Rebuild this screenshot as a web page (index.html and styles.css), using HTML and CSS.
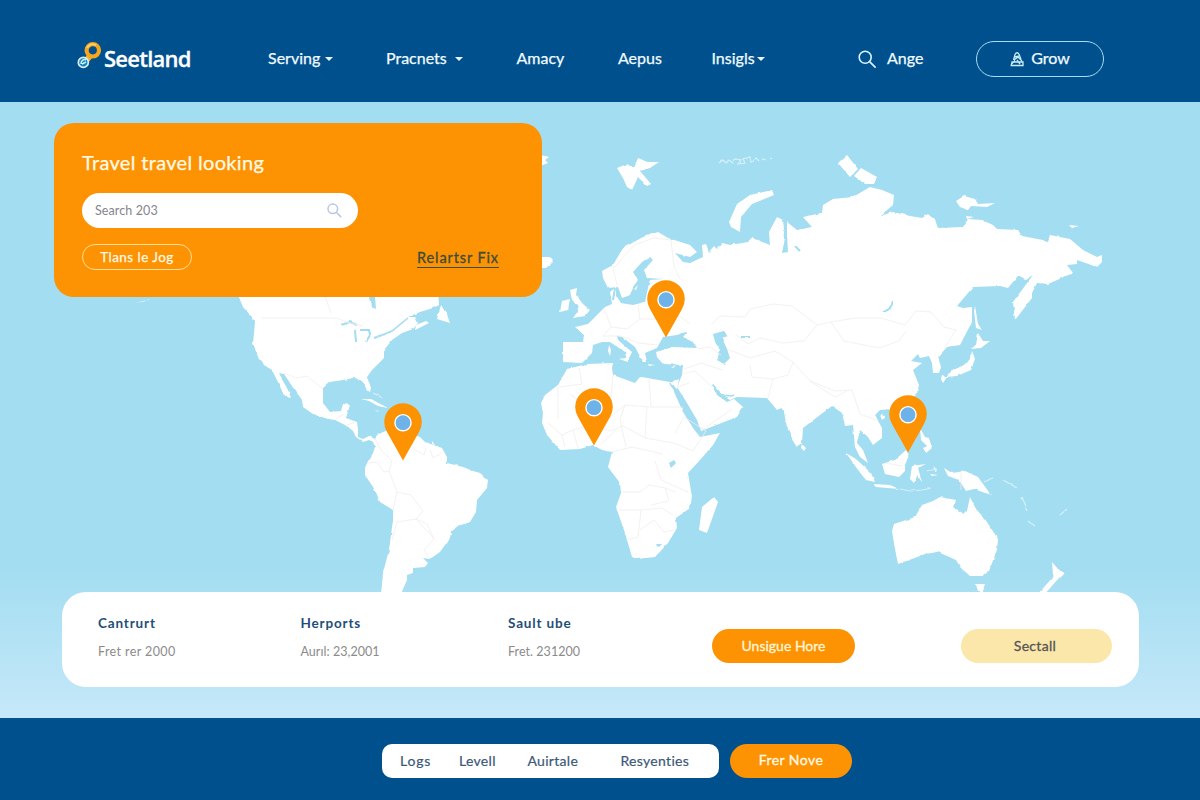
FILE: index.html
```html
<!DOCTYPE html>
<html lang="en">
<head>
<meta charset="utf-8">
<title>Seetland</title>
<link rel="stylesheet" href="styles.css">
</head>
<body>
<header class="header">
  <a class="logo">
    <svg width="27" height="30" viewBox="0 0 27 30" fill="none">
      <path d="M12.5 15.5l-4 5" stroke="#f3b13e" stroke-width="6"/>
      <circle cx="15.8" cy="9.3" r="6.2" stroke="#f9a51d" stroke-width="4.2"/>
      <path d="M10 7a6.5 6.5 0 0 1 9-3" stroke="#ffd878" stroke-width="1.6"/>
      <circle cx="6.3" cy="21.4" r="5" fill="#1580bd" stroke="#d9eef2" stroke-width="1.7"/>
      <path d="M4 23c0-4 3-5 5-4M5 23l4-2" stroke="#c8f3fa" stroke-width="1.5"/>
    </svg>
    <span>Seetland</span>
  </a>
  <a class="nav serving">Serving <i class="caret"></i></a>
  <a class="nav pracnets">Pracnets <i class="caret"></i></a>
  <a class="nav">Amacy</a>
  <a class="nav">Aepus</a>
  <a class="nav insigls">Insigls <i class="caret"></i></a>
  <a class="nav find">
    <svg width="19" height="19" viewBox="0 0 19 19" fill="none" stroke="#d8f3ff" stroke-width="1.6"><circle cx="7.2" cy="7.2" r="6"/><path d="M11.6 11.6l6 6"/></svg>
    <span>Ange</span>
  </a>
  <a class="nav grow">
    <svg width="15" height="16" viewBox="0 0 15 16" fill="none" stroke="#c8edfa" stroke-width="1.3"><path d="M3.5 9L5 3.5Q7 0 9.2 3.5L11 8.5M5 6l4-1M4 9l4-3 4 4M1 13.5l4-4M2 11h11v3.5H1.2zM7 9l3 4"/></svg>
    <span>Grow</span>
  </a>
</header>

<main class="stage">
  <svg class="map" width="1200" height="616" viewBox="0 102 1200 616">
    <defs>
      <filter id="coast" x="0" y="0" width="100%" height="100%">
        <feTurbulence type="fractalNoise" baseFrequency="0.16" numOctaves="1" seed="4"/>
        <feDisplacementMap in="SourceGraphic" scale="2.6" xChannelSelector="R" yChannelSelector="G"/>
        <feGaussianBlur stdDeviation="0.35"/>
      </filter>
    </defs>
    <g class="land" filter="url(#coast)">
      <!-- North and South America -->
      <path d="M236 290L243 307 252 317 255 322 254 333 253 343 258 357 267 367 272 370 277 380 283 393 289 398 291 397 287 388 282 379 279 373 284 374 292 386 302 400 303 407 313 414 328 419 335 420 347 426 353 431 356 437 363 442 369 440 373 442 375 447 373 453 367 463 365 468 365 475 375 490 380 502 393 510 393 520 389 550 383 573 381 596 400 596 407 580 407 575 413 573 413 568 425 567 428 563 423 558 430 559 440 552 450 538 451 531 458 526 470 522 476 512 477 500 487 488 488 480 480 473 473 471 463 467 447 463 447 457 442 448 425 442 420 437 395 428 383 432 377 435 375 439 369 436 363 439 358 437 358 430 357 422 346 418 350 405 343 404 341 411 330 412 323 403 323 388 330 382 343 380 355 378 362 381 367 390 370 392 371 388 367 377 372 370 384 358 384 350 392 340 402 333 413 329 418 323 415 317 408 317 420 312 433 308 439 305 438 290Z"/>
      <path d="M441 305L437 319 450 323 447 315ZM415 330L429 323 426 321 416 325Z"/>
      <path d="M136 303L150 299 158 295 146 301ZM361 399L371 399 388 408 378 406 369 401ZM375 410l5 2-4-1zM432 441l3 4-3-1z"/>
      <!-- Eurasia -->
      <path d="M563 342L583 342 584 335 575 327 588 324 597 315 605 307 612 304 610 292 616 287 616 295 621 303 633 305 645 302 648 288 650 280 663 279 647 278 644 270 653 260 650 257 642 262 633 272 638 280 633 287 630 295 622 298 618 287 608 288 603 278 602 271 613 265 623 248 643 237 658 232 668 238 690 245 697 252 690 257 675 253 683 262 690 263 703 257 702 245 706 244 709 252 714 246 717 249 722 243 730 245 748 242 752 238 770 245 769 232 777 217 783 220 785 238 782 253 788 252 787 235 787 222 797 230 812 227 803 217 822 213 823 205 833 199 853 197 870 187 882 190 894 195 893 205 880 216 893 212 910 216 922 218 928 214 935 220 938 228 963 227 968 219 982 220 993 225 997 229 1018 230 1022 236 1048 241 1050 235 1070 239 1083 250 1097 257 1102 255 1102 262 1097 267 1077 260 1077 264 1067 265 1073 273 1048 284 1037 283 1032 293 1032 298 1015 320 1013 302 1033 275 1025 280 1018 276 1008 288 1000 286 973 287 957 306 963 308 972 307 972 322 960 345 947 347 938 357 941 367 939 373 933 373 932 363 929 356 920 358 918 354 911 361 922 363 913 370 919 385 917 393 900 408 880 410 875 415 882 428 882 438 873 445 868 437 860 430 857 443 863 450 868 463 860 457 855 447 853 425 845 426 842 413 832 406 820 415 803 428 802 443 796 447 787 427 783 408 777 410 767 398 737 397 730 400 722 395 712 383 717 395 727 402 734 399 743 407 737 417 701 431 697 420 687 403 677 387 682 375 683 365 663 364 657 357 656 352 673 347 697 348 692 341 683 337 687 332 677 335 663 337 657 348 645 353 647 362 643 362 635 347 622 337 617 336 618 340 632 352 627 362 625 352 610 342 602 342 593 345 592 353 582 363 563 362Z"/>
      <!-- Africa and Madagascar -->
      <path d="M613 363L587 364 567 369 558 385 545 395 541 403 543 413 542 423 547 435 560 450 580 449 593 445 602 450 612 452 608 467 620 483 621 493 616 507 625 533 632 557 637 559 655 557 668 543 677 528 676 518 690 508 692 497 688 473 700 460 713 445 720 433 700 437 693 428 683 412 671 385 677 389 679 379 670 382 653 379 640 377 635 383 613 375 612 368ZM714 497L718 502 707 533 699 530 702 507Z"/>
      <!-- British Isles, Iceland, Mediterranean -->
      <path d="M570 290L577 288 576 295 583 304 590 310 585 316 573 318 578 311 577 304 572 300ZM562 301L570 299 568 310 560 312ZM540 257L550 257 553 261 546 268 538 268ZM540 155l9 2-4 3 3 3-8 3zM609 345l2 5-1 6-2-5zM619 359l8-1 1 4zM634 289l4-4-2 5zM648 364l7 1-6 1zM671 367l5-1-3 2z"/>
      <!-- Arctic islands -->
      <path d="M617 168L627 164 634 167 638 158 648 162 659 162 650 168 640 171 651 184 647 186 638 177 632 190 627 187 623 178ZM731 227L729 222 737 204 750 195 772 190 774 195 752 204 741 217 740 232ZM838 163L847 155 858 169 850 177ZM854 176L861 168 877 177 874 184 865 184ZM956 201L964 196 975 199 978 204 995 203 987 207 971 206 968 210 960 207ZM1069 225l10 1-7 2zM966 216l8 1-7 2z"/>
      <!-- Japan and Sakhalin -->
      <path d="M975 306L978 324 982 330 976 328 974 311ZM978 333L983 341 990 341 981 348 971 349 976 345ZM972 351L975 359 971 370 957 376 945 377 953 370 965 365 970 359ZM942 375l5 2-4 6-2-4z"/>
      <!-- South East Asia -->
      <path d="M846 453L856 459 871 473 875 482 866 480 858 470ZM873 484L890 485 899 489 876 487ZM882 464L895 460 906 450 909 455 905 465 905 471 899 477 885 474ZM912 466L926 464 918 468 922 482 917 475 914 483 910 479ZM920 428L925 437 929 438 932 448 926 453 923 448 927 446 921 440ZM944 468L952 473 965 471 978 477 991 495 974 489 966 491 959 480 948 476ZM802 444l4 4-2 3-3-3zM880 415l5 1-3 4zM933 466l4 4-2 1zM930 474l8 1-6 1z"/>
      <!-- Australia and New Zealand -->
      <path d="M892 531L894 524 915 517 922 505 933 501 940 497 956 500 953 507 964 514 967 511 970 497 976 509 985 519 998 539 997 550 989 571 983 576 970 576 961 568 956 560 947 556 938 552 925 554 912 559 898 564 895 549ZM976 584L985 584 982 592 978 592ZM1052 562L1058 569 1065 573 1058 580 1053 575ZM1054 576L1058 579 1043 596 1036 596Z"/>
      <path class="isles" d="M719 163l4-3 3 3 3-3 4 3 2-4 6 1-3 4 7-1-2-4 7-2 1 5 5-4 3 3M762 160l3-1M770 159l2-1M900 489l10 2 13-1 8-2M984 482l9-4M1003 480l14 8M1022 497l6 14M1028 521l7 5M1060 515l7-6M373 393l10 5M927 471l10-2"/>
    </g>
    <!-- Inland water -->
    <g class="water" filter="url(#coast)">
      <path d="M713 334L724 331 728 336 722 338 727 349 730 358 724 364 717 360 720 350 715 342ZM669 463L674 460 676 463 671 468ZM369 297L375 297 376 309 371 307ZM656 544l6 0-3 3zM679 334l7-2-4 4z"/>
      <path class="rivers" d="M883 312q8-2 10-11M341 325l9-3 7 3M355 330l1 12M360 330l9 0 1 5-4 7M374 338l8-3M671 383l16 23 11 22M615 288l-2 12M741 337l9 0M795 246l5 5M281 375l9 16"/>
      <path class="straits" d="M382 335l10-4 16-13M712 384l9 10 7 3 6-2"/>
    </g>
    <g class="borders">
      <path d="M261 318H337L346 322 363 326M325 296L331 313M284 373L296 378 307 376 323 389M336 419L344 414M347 425L356 422M375 439L381 450 392 461 389 471 397 492 393 510M367 463L377 462 384 472 389 471M397 492L411 495 423 511 416 519 397 522 392 540M416 519L430 534 434 539 424 550 430 559M434 539L427 524 416 519M414 449L424 455 426 448M430 450L433 458 443 452"/>
      <path d="M579 368L582 384 558 387M558 387V419M570 394L605 421 625 405 651 407M613 375L611 397M649 379L651 407H683M548 423L562 435 573 430 590 425 610 431 623 426 645 438 674 443M612 452L632 447 663 454M625 405L620 420 626 447M647 407L645 438M675 433L684 417 706 431 693 451 674 443M621 492L640 492 649 485 665 488 669 501 651 505M616 510H641L638 537 626 540M641 510L662 508 673 515M640 530L654 520 664 532 674 530M655 461L661 480 688 492M665 488L675 492M602 443L616 430M562 435L565 447M573 430L578 448"/>
      <path d="M618 288L613 269 634 245 654 238 671 240 674 267 680 279M638 305L640 319 658 319 680 316 690 324M604 308L611 327 627 329 640 319M611 327L603 336 621 336 638 343 657 345M711 325L720 316 745 317 750 309 773 304 792 306 817 325 831 322 855 318 881 318 905 325 916 311 931 312 944 327 956 330 945 347M831 322L844 341 879 348 899 341 906 331M817 325L804 341 783 343 760 338 748 344 736 335M727 349L750 358 775 351 793 362 788 375 773 379 768 398M773 379L752 377 750 365M793 362L810 381 835 391 852 390 860 414 876 420M810 381L835 397 847 391M684 369L701 363 722 370M682 374L695 371 712 387M677 387L689 383M701 431L732 409M698 349L710 347 721 355M885 463L902 466M961 471V490"/>
    </g>
  </svg>

  <svg class="pin caracas" viewBox="0 0 38 58"><path d="M19 57.5L3 29Q.2 24 .2 19a18.8 18.8 0 0 1 37.6 0Q37.8 24 35 29Z"/><circle cx="19" cy="19.7" r="8.1"/></svg>
  <svg class="pin niger" viewBox="0 0 38 58"><path d="M19 57.5L3 29Q.2 24 .2 19a18.8 18.8 0 0 1 37.6 0Q37.8 24 35 29Z"/><circle cx="19" cy="19.7" r="8.1"/></svg>
  <svg class="pin odesa" viewBox="0 0 38 58"><path d="M19 57.5L3 29Q.2 24 .2 19a18.8 18.8 0 0 1 37.6 0Q37.8 24 35 29Z"/><circle cx="19" cy="19.7" r="8.1"/></svg>
  <svg class="pin borneo" viewBox="0 0 38 58"><path d="M19 57.5L3 29Q.2 24 .2 19a18.8 18.8 0 0 1 37.6 0Q37.8 24 35 29Z"/><circle cx="19" cy="19.7" r="8.1"/></svg>

  <section class="search-card">
    <h1>Travel travel looking</h1>
    <div class="search-box">
      <span>Search 203</span>
      <svg width="15" height="15" viewBox="0 0 15 15" fill="none" stroke="#bcc6e2" stroke-width="1.5"><circle cx="5.8" cy="5.8" r="4.8"/><path d="M9.3 9.3l4.8 4.8"/></svg>
    </div>
    <div class="card-row">
      <a class="chip">Tlans le Jog</a>
      <a class="related">Relartsr Fix</a>
    </div>
  </section>

  <section class="info-card">
    <div class="info"><h2>Cantrurt</h2><p class="wide">Fret rer 2000</p></div>
    <div class="info"><h2>Herports</h2><p>Aurıl: 23,2001</p></div>
    <div class="info"><h2>Sault ube</h2><p>Fret. 231200</p></div>
    <a class="btn more">Unsigue Hore</a>
    <a class="btn pale">Sectall</a>
  </section>
</main>

<footer class="footer">
  <nav class="links">
    <a class="logs">Logs</a><a>Levell</a><a>Auirtale</a><a>Resyenties</a>
  </nav>
  <a class="btn join">Frer Nove</a>
</footer>
</body>
</html>
```
FILE: styles.css
```css
* { box-sizing: border-box; }
body { margin: 0; width: 1200px; height: 800px; overflow: hidden; font-family: Lato, "Noto Sans", sans-serif; background: #00508d; }
h1, h2, p { margin: 0; }

.header { height: 102px; padding: 16px 96px 0 77px; background: #00508d; display: grid; grid-template-columns: 191px 118px 130.5px 101.5px 93.5px 146.5px 118px 128px; align-items: center; color: #f2fbff; }
.logo { display: flex; align-items: center; height: 34px; margin-top: -6px; color: #fff; font: 600 22px "Open Sans", sans-serif; letter-spacing: -0.75px; -webkit-text-stroke: 0.3px #fff; }
.logo svg { -webkit-text-stroke: 0; }
.logo span { padding-top: 3px; }
.nav { display: flex; align-items: center; font-size: 16px; font-weight: 400; white-space: nowrap; padding-bottom: 3px; -webkit-text-stroke: 0.25px currentColor; }
.caret { border: 4px solid transparent; border-top: 4.5px solid #e8f7ff; border-bottom: 0; margin-left: 5px; margin-top: 2px; }
.pracnets .caret { margin-left: 8px; }
.insigls .caret { margin-left: 2px; }
.find { gap: 10px; padding-bottom: 0; }
.find span, .grow span { padding-bottom: 3px; }
.grow { height: 36px; padding-bottom: 0; border: 1.5px solid #a9dcf2; border-radius: 18px; justify-content: center; gap: 6px; }

.stage { position: relative; height: 616px; padding: 20.5px 54px 0; background: linear-gradient(#a3ddf1 0, #a3ddf1 465px, #c5e8f9 616px); }
.map { position: absolute; left: 0; top: 0; }
.land { fill: #fff; }
.isles { fill: none; stroke: #d5f0fa; stroke-width: 1.2; }
.water { fill: #a3ddf1; }
.rivers { fill: none; stroke: #a3ddf1; stroke-width: 2; }
.straits { fill: none; stroke: #a3ddf1; stroke-width: 1.6; }
.borders { fill: none; stroke: #f1eeeb; stroke-width: 0.8; stroke-linejoin: round; }

.pin { position: absolute; width: 38px; height: 58px; fill: #fd9202; }
.pin circle { fill: #6db2e8; stroke: #fff; stroke-width: 1.4; }
.caracas { left: 384px; top: 301px; }
.niger { left: 575px; top: 286px; }
.odesa { left: 647px; top: 178px; }
.borneo { left: 889px; top: 293px; }

.search-card { position: relative; width: 488px; height: 174.5px; padding: 25px 43px 0 28px; border-radius: 20px; background: #fd9202; color: #fffbe8; }
.search-card h1 { font-size: 20px; line-height: 28px; font-weight: 400; letter-spacing: 0.33px; -webkit-text-stroke: 0.25px currentColor; }
.search-box { width: 276px; height: 35px; margin-top: 17.5px; padding: 0 16px 0 13px; border-radius: 18px; background: #fff; display: flex; align-items: center; justify-content: space-between; color: #858590; font-size: 12.5px; letter-spacing: 0.1px; }
.card-row { display: flex; justify-content: space-between; align-items: center; margin-top: 16px; }
.chip { width: 110px; height: 26px; border: 1px solid #ffe09a; border-radius: 13px; display: flex; align-items: center; justify-content: center; font-size: 13.5px; letter-spacing: 0.45px; -webkit-text-stroke: 0.25px currentColor; }
.related { color: #3c4d3b; font-size: 14.5px; line-height: 18px; letter-spacing: 0.9px; border-bottom: 1.5px solid #3c4d3b; margin-top: 2px; -webkit-text-stroke: 0.3px currentColor; }

.info-card { position: relative; width: 1077px; height: 95px; margin: 295px 0 0 8px; padding: 0 27px 0 36px; border-radius: 24px; background: #fff; display: grid; grid-template-columns: 202.5px 207.5px 204px 249px 151px; }
.info { padding-top: 20.5px; }
.info h2 { color: #1f4e79; font-size: 13.5px; line-height: 20px; font-weight: 700; letter-spacing: 0.85px; }
.info p { color: #8b8b8b; font-size: 12.5px; line-height: 18px; margin-top: 10.5px; white-space: nowrap; letter-spacing: 0.05px; }
.info .wide { letter-spacing: 0.4px; }
.btn { display: flex; align-items: center; justify-content: center; height: 34px; padding-bottom: 1px; border-radius: 17px; font-size: 14px; background: #fd9202; color: #fff6d8; -webkit-text-stroke: 0.3px currentColor; }
.more { width: 143px; margin-top: 37px; }
.pale { width: 151px; margin-top: 37px; padding-right: 3px; background: #fce7aa; color: #555; letter-spacing: 0.3px; }

.footer { height: 82px; padding: 26px 0 0 382px; background: #00508d; display: flex; gap: 11px; }
.links { width: 337px; height: 34px; padding: 0 0 2px 18px; border-radius: 10px; background: #fff; display: grid; grid-template-columns: 59px 68.5px 93px 1fr; align-items: center; color: #3b5878; font-size: 14px; letter-spacing: 0.3px; -webkit-text-stroke: 0.2px currentColor; }
.logs { letter-spacing: 0.8px; }
.join { width: 122px; padding-bottom: 3px; color: #fffbe8; letter-spacing: 0.45px; }
```
